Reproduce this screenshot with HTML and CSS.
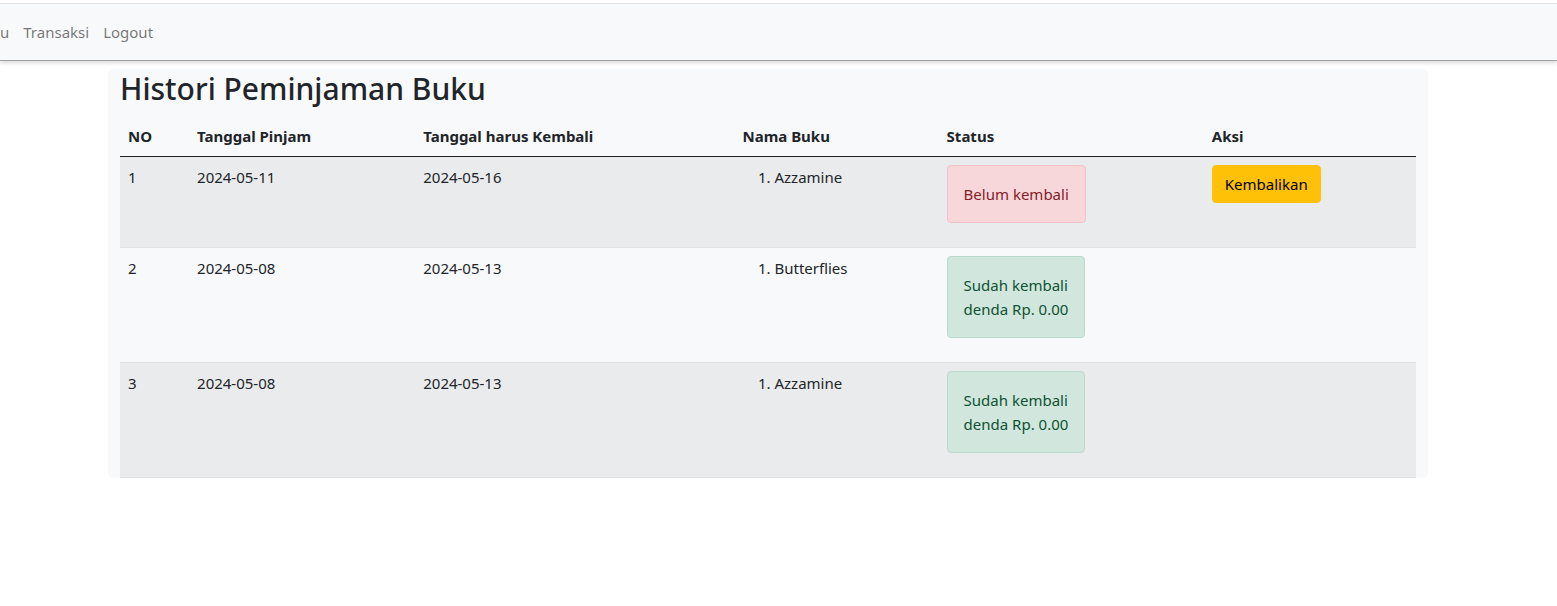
FILE: index.html
```html
<!DOCTYPE html>
<html lang="id">
<head>
<meta charset="utf-8">
<title>Histori Peminjaman Buku</title>
<link rel="stylesheet" href="styles.css">
</head>
<body>
<nav class="navbar">
  <ul class="nav-list">
    <li><a class="nav-link" href="#">u</a></li>
    <li><a class="nav-link" href="#">Transaksi</a></li>
    <li><a class="nav-link" href="#">Logout</a></li>
  </ul>
</nav>
<main class="panel">
  <h2 class="title">Histori Peminjaman Buku</h2>
  <table class="history">
    <thead>
      <tr>
        <th class="c-no">NO</th>
        <th class="c-pinjam">Tanggal Pinjam</th>
        <th class="c-kembali">Tanggal harus Kembali</th>
        <th class="c-buku">Nama Buku</th>
        <th class="c-status">Status</th>
        <th class="c-aksi">Aksi</th>
      </tr>
    </thead>
    <tbody>
      <tr class="odd">
        <td>1</td>
        <td>2024-05-11</td>
        <td>2024-05-16</td>
        <td><ol class="books"><li>Azzamine</li></ol></td>
        <td><div class="alert alert-danger">Belum kembali</div></td>
        <td><button class="btn-warning">Kembalikan</button></td>
      </tr>
      <tr>
        <td>2</td>
        <td>2024-05-08</td>
        <td>2024-05-13</td>
        <td><ol class="books"><li>Butterflies</li></ol></td>
        <td><div class="alert alert-success">Sudah kembali<br>denda Rp. 0.00</div></td>
        <td></td>
      </tr>
      <tr class="odd">
        <td>3</td>
        <td>2024-05-08</td>
        <td>2024-05-13</td>
        <td><ol class="books"><li>Azzamine</li></ol></td>
        <td><div class="alert alert-success">Sudah kembali<br>denda Rp. 0.00</div></td>
        <td></td>
      </tr>
    </tbody>
  </table>
</main>
</body>
</html>
```

FILE: styles.css
```css
* { box-sizing: border-box; }

body {
  margin: 0;
  font-family: "Segoe UI", "Noto Sans", "Open Sans", sans-serif;
  font-size: 15px;
  line-height: 24px;
  color: #212529;
  background: #fff;
}

.navbar {
  margin-top: 3px;
  border-top: 1px solid #e3e3e3;
  background: #f8f9fa;
  height: 57px;
  display: flex;
  align-items: center;
  box-shadow: 0 1px 0 #a0a0a0, 0 3px 4px rgba(0, 0, 0, 0.15);
}

.nav-list {
  list-style: none;
  margin: 0;
  padding: 0;
  display: flex;
  gap: 14px;
}

.nav-link {
  display: block;
  color: rgba(0, 0, 0, 0.55);
  text-decoration: none;
  padding: 8px 0;
}

.panel {
  width: 1320px;
  margin: 9px 0 0 108px;
  padding: 0 12px;
  background: #f8f9fa;
  border-radius: 5px;
}

.title {
  margin: 0 0 8px;
  font-size: 30px;
  font-weight: 500;
  line-height: 38.4px;
  padding-top: 1px;
}

.history {
  width: 100%;
  border-collapse: collapse;
  table-layout: fixed;
}

.c-no { width: 69px; }
.c-pinjam { width: 226px; }
.c-kembali { width: 319px; }
.c-buku { width: 204px; }
.c-status { width: 265px; }
.c-aksi { width: 212px; }

.history th,
.history td {
  padding: 8px;
  text-align: left;
  vertical-align: top;
  border-bottom: 1px solid #dee2e6;
}

.history th {
  font-weight: 700;
  border-bottom: 1px solid #212529;
  vertical-align: bottom;
}

.history tbody tr.odd td {
  background: #eaebec;
}

.books {
  margin: 0;
  padding-left: 32px;
}

.alert {
  display: inline-block;
  white-space: nowrap;
  padding: 16px;
  margin-bottom: 16px;
  border: 1px solid transparent;
  border-radius: 4px;
  min-width: 138px;
}

.alert-danger {
  color: #842029;
  background: #f8d7da;
  border-color: #f5c2c7;
}

.alert-success {
  color: #0f5132;
  background: #d1e7dd;
  border-color: #badbcc;
}

.btn-warning {
  font-family: inherit;
  font-size: 15px;
  line-height: 24px;
  padding: 6px 12px;
  color: #000;
  background: #ffc107;
  border: 1px solid #ffc107;
  border-radius: 4px;
}
```
